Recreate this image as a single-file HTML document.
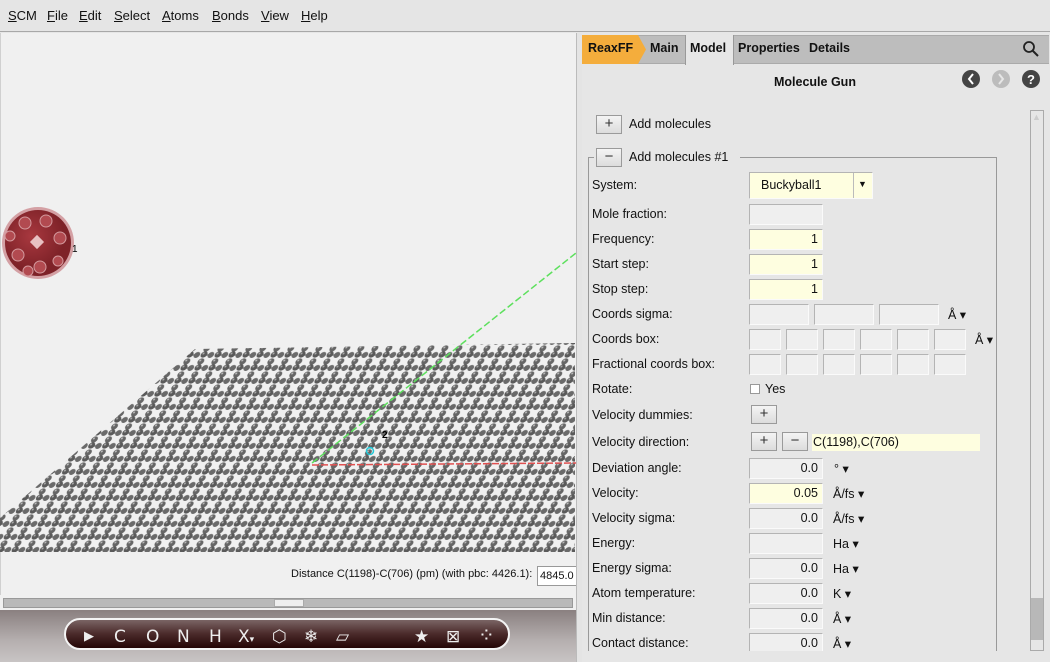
<!DOCTYPE html>
<html><head><meta charset="utf-8"><style>
*{box-sizing:border-box;margin:0;padding:0}
body{width:1050px;height:662px;overflow:hidden;background:#e6e6e6;font-family:"Liberation Sans",sans-serif;font-size:12.5px;color:#111;position:relative}
.a{position:absolute}
.menu{left:0;top:0;width:1050px;height:32px;background:#e5e5e5;border-bottom:1px solid #a8a8a8}
.menu span{position:absolute;top:8px;font-size:13px}
.menu u{text-decoration:underline}
.lbl{position:absolute;left:592px;font-size:12.5px}
.inp{position:absolute;height:21px;background:#efefef;border:1px solid #b4b4b4;border-right-color:#fafafa;border-bottom-color:#fafafa;text-align:right;padding-right:4px;line-height:19px;font-size:12.5px}
.y{background:#fefee0}
.btn{position:absolute;width:26px;height:19px;background:linear-gradient(#f4f4f4,#dcdcdc);border:1px solid #9a9a9a;text-align:center;line-height:16px;font-size:15px;color:#333}
.unit{position:absolute;font-size:12.5px}
.tool span{position:absolute;top:7px;color:#eee;font-size:17px;font-family:"DejaVu Sans",sans-serif}
</style></head><body>
<div class="a menu">
<span style="left:8px"><u>S</u>CM</span><span style="left:47px"><u>F</u>ile</span><span style="left:79px"><u>E</u>dit</span><span style="left:114px"><u>S</u>elect</span><span style="left:162px"><u>A</u>toms</span><span style="left:212px"><u>B</u>onds</span><span style="left:261px"><u>V</u>iew</span><span style="left:301px"><u>H</u>elp</span>
</div>
<div class="a" style="left:0;top:33px;width:576px;height:562px;background:#f0f0f0;border-left:1px solid #d0d0d0"></div>
<svg class="a" style="left:0;top:33px" width="576" height="530">
<defs>
<pattern id="g" width="14" height="13" patternUnits="userSpaceOnUse" patternTransform="skewX(-25)">
<rect width="14" height="13" fill="#f0f0f0"/>
<line x1="4" y1="3" x2="4" y2="10" stroke="#666" stroke-width="2.5"/>
<line x1="4" y1="10" x2="11" y2="10" stroke="#777" stroke-width="1.5"/>
<circle cx="4" cy="3.5" r="3.2" fill="#666"/><circle cx="4" cy="9.5" r="3.2" fill="#5a5a5a"/>
<circle cx="11" cy="10" r="3" fill="#6a6a6a"/><circle cx="3" cy="2.5" r="1" fill="#bbb"/><circle cx="3" cy="8.5" r="1" fill="#aaa"/>
</pattern>
<radialGradient id="r" cx="0.4" cy="0.4"><stop offset="0" stop-color="#a8383f"/><stop offset="1" stop-color="#7e2228"/></radialGradient>
</defs>
<polygon points="195,316 575,310 575,519 0,519 0,485" fill="url(#g)"/>
<circle cx="38" cy="210" r="36" fill="#d4a0a4"/>
<circle cx="38" cy="210" r="33" fill="url(#r)"/>
<g fill="#b24a50" stroke="#d49a9e" stroke-width="1"><circle cx="25" cy="190" r="6"/><circle cx="46" cy="188" r="6"/><circle cx="60" cy="205" r="6"/><circle cx="18" cy="222" r="6"/><circle cx="40" cy="234" r="6"/><circle cx="58" cy="228" r="5"/><circle cx="10" cy="203" r="5"/><circle cx="28" cy="238" r="5"/></g>
<rect x="32" y="204" width="10" height="10" fill="#e8c0c2" transform="rotate(45 37 209)"/>
<text x="72" y="219" font-size="10" font-family="Liberation Sans">1</text>
<line x1="312" y1="430" x2="576" y2="220" stroke="#5de05d" stroke-width="1.5" stroke-dasharray="7,3"/>
<line x1="312" y1="432" x2="576" y2="430" stroke="#e05050" stroke-width="1.5" stroke-dasharray="7,2"/>
<circle cx="370" cy="418" r="3.5" fill="none" stroke="#20c8d8" stroke-width="1.5"/>
<text x="382" y="405" font-size="10" font-weight="bold">2</text>
</svg>
<div class="a" style="left:291px;top:568px;font-size:11px">Distance C(1198)-C(706) (pm) (with pbc: 4426.1):</div>
<div class="a" style="left:537px;top:566px;width:40px;height:20px;background:#fff;border:1px solid #999;font-size:11px;padding:3px 0 0 2px">4845.0</div>
<div class="a" style="left:0;top:595px;width:576px;height:15px;background:#f0f0f0"></div>
<div class="a" style="left:3px;top:598px;width:570px;height:10px;background:#b9b9b9;border:1px solid #999"></div>
<div class="a" style="left:274px;top:599px;width:30px;height:8px;background:#eee;border:1px solid #aaa"></div>
<div class="a" style="left:0;top:610px;width:576px;height:52px;background:linear-gradient(#8a8080,#b6b0b0 60%,#c8c4c4)"></div>
<div class="a tool" style="left:64px;top:618px;width:446px;height:32px;border-radius:16px;border:2px solid #f4f4f4;background:linear-gradient(#7a6464,#4a2a2a 50%,#240505)">
<span style="left:18px;font-size:13px;top:9px">▶</span><span style="left:48px">C</span><span style="left:80px">O</span><span style="left:111px">N</span><span style="left:143px">H</span><span style="left:172px">X<small style="font-size:9px">▾</small></span><span style="left:206px">⬡</span><span style="left:238px">❄</span><span style="left:270px">▱</span><span style="left:348px">★</span><span style="left:380px">⊠</span><span style="left:412px;font-size:20px;top:3px">⁘</span>
</div>
<div class="a" style="left:576px;top:33px;width:6px;height:629px;background:#e4e4e4;border-left:1px solid #bbb"></div>
<div class="a" style="left:582px;top:35px;width:467px;height:29px;background:#bdbdbd;border-top:1px solid #aaa;border-bottom:1px solid #aaa"></div>
<svg class="a" style="left:582px;top:35px" width="65" height="29"><polygon points="0,0 56,0 64,14.5 56,29 0,29" fill="#f4ad3c"/></svg>
<div class="a" style="left:588px;top:41px;font-weight:bold">ReaxFF</div>
<div class="a" style="left:650px;top:41px;font-weight:bold">Main</div>
<div class="a" style="left:685px;top:35px;width:49px;height:30px;background:#e6e6e6;border-left:1px solid #999;border-right:1px solid #999"></div>
<div class="a" style="left:690px;top:41px;font-weight:bold">Model</div>
<div class="a" style="left:738px;top:41px;font-weight:bold">Properties</div>
<div class="a" style="left:809px;top:41px;font-weight:bold">Details</div>
<svg class="a" style="left:1022px;top:40px" width="18" height="18"><circle cx="7" cy="7" r="5" fill="none" stroke="#222" stroke-width="1.8"/><line x1="11" y1="11" x2="16" y2="16" stroke="#222" stroke-width="2"/></svg>
<div class="a" style="left:774px;top:75px;font-weight:bold">Molecule Gun</div>
<svg class="a" style="left:961px;top:69px" width="80" height="20"><circle cx="10" cy="10" r="9" fill="#444"/><path d="M12 5 L8 10 L12 15" stroke="#fff" stroke-width="2" fill="none"/><circle cx="40" cy="10" r="9" fill="#bcbcbc"/><path d="M38 5 L42 10 L38 15" stroke="#e6e6e6" stroke-width="2" fill="none"/><circle cx="70" cy="10" r="9" fill="#444"/><text x="66" y="15" fill="#fff" font-size="13" font-weight="bold" font-family="Liberation Sans">?</text></svg>
<div class="btn" style="left:596px;top:115px">+</div><div class="a" style="left:629px;top:117px">Add molecules</div>
<div class="a" style="left:588px;top:157px;width:409px;height:505px;border:1px solid #999;border-bottom:none"></div>
<div class="a" style="left:594px;top:148px;width:146px;height:18px;background:#e6e6e6"></div>
<div class="btn" style="left:596px;top:148px">−</div><div class="a" style="left:629px;top:150px">Add molecules #1</div>
<div class="a" style="left:1030px;top:110px;width:14px;height:541px;background:#e6e6e6;border:1px solid #aaa"></div>
<div class="a" style="left:1031px;top:598px;width:12px;height:42px;background:#b8b8b8"></div>
<div class="a" style="left:1032px;top:112px;font-size:9px;color:#ccc">▲</div>
<div class="lbl" style="top:178px">System:</div>
<div class="inp y" style="left:749px;top:172px;width:124px;height:27px;text-align:left;padding-left:11px;line-height:25px">Buckyball1</div>
<div class="a" style="left:853px;top:173px;width:1px;height:25px;background:#bbb"></div><div class="a" style="left:858px;top:179px;font-size:9px">▼</div>
<div class="lbl" style="top:207px">Mole fraction:</div><div class="inp" style="left:749px;top:204px;width:74px"></div>
<div class="lbl" style="top:232px">Frequency:</div><div class="inp y" style="left:749px;top:229px;width:74px">1</div>
<div class="lbl" style="top:257px">Start step:</div><div class="inp y" style="left:749px;top:254px;width:74px">1</div>
<div class="lbl" style="top:282px">Stop step:</div><div class="inp y" style="left:749px;top:279px;width:74px">1</div>
<div class="lbl" style="top:307px">Coords sigma:</div>
<div class="inp" style="left:749px;top:304px;width:60px"></div><div class="inp" style="left:814px;top:304px;width:60px"></div><div class="inp" style="left:879px;top:304px;width:60px"></div><div class="unit" style="left:948px;top:307px">Å ▾</div>
<div class="lbl" style="top:332px">Coords box:</div>
<div class="inp" style="left:749px;top:329px;width:32px"></div><div class="inp" style="left:786px;top:329px;width:32px"></div><div class="inp" style="left:823px;top:329px;width:32px"></div><div class="inp" style="left:860px;top:329px;width:32px"></div><div class="inp" style="left:897px;top:329px;width:32px"></div><div class="inp" style="left:934px;top:329px;width:32px"></div><div class="unit" style="left:975px;top:332px">Å ▾</div>
<div class="lbl" style="top:357px">Fractional coords box:</div>
<div class="inp" style="left:749px;top:354px;width:32px"></div><div class="inp" style="left:786px;top:354px;width:32px"></div><div class="inp" style="left:823px;top:354px;width:32px"></div><div class="inp" style="left:860px;top:354px;width:32px"></div><div class="inp" style="left:897px;top:354px;width:32px"></div><div class="inp" style="left:934px;top:354px;width:32px"></div>
<div class="lbl" style="top:382px">Rotate:</div><div class="a" style="left:750px;top:384px;width:10px;height:10px;background:#fff;border:1px solid #999"></div><div class="a" style="left:765px;top:382px">Yes</div>
<div class="lbl" style="top:408px">Velocity dummies:</div><div class="btn" style="left:751px;top:405px">+</div>
<div class="lbl" style="top:435px">Velocity direction:</div><div class="btn" style="left:751px;top:432px">+</div><div class="btn" style="left:782px;top:432px">−</div>
<div class="a" style="left:812px;top:434px;width:168px;height:17px;background:#fefee0;padding-left:1px;line-height:16px">C(1198),C(706)</div>
<div class="lbl" style="top:461px">Deviation angle:</div><div class="inp" style="left:749px;top:458px;width:74px">0.0</div><div class="unit" style="left:834px;top:461px">° ▾</div>
<div class="lbl" style="top:486px">Velocity:</div><div class="inp y" style="left:749px;top:483px;width:74px">0.05</div><div class="unit" style="left:833px;top:486px">Å/fs ▾</div>
<div class="lbl" style="top:511px">Velocity sigma:</div><div class="inp" style="left:749px;top:508px;width:74px">0.0</div><div class="unit" style="left:833px;top:511px">Å/fs ▾</div>
<div class="lbl" style="top:536px">Energy:</div><div class="inp" style="left:749px;top:533px;width:74px"></div><div class="unit" style="left:833px;top:536px">Ha ▾</div>
<div class="lbl" style="top:561px">Energy sigma:</div><div class="inp" style="left:749px;top:558px;width:74px">0.0</div><div class="unit" style="left:833px;top:561px">Ha ▾</div>
<div class="lbl" style="top:586px">Atom temperature:</div><div class="inp" style="left:749px;top:583px;width:74px">0.0</div><div class="unit" style="left:833px;top:586px">K ▾</div>
<div class="lbl" style="top:611px">Min distance:</div><div class="inp" style="left:749px;top:608px;width:74px">0.0</div><div class="unit" style="left:833px;top:611px">Å ▾</div>
<div class="lbl" style="top:636px">Contact distance:</div><div class="inp" style="left:749px;top:633px;width:74px">0.0</div><div class="unit" style="left:833px;top:636px">Å ▾</div>
<div class="a" style="left:582px;top:651px;width:468px;height:11px;background:#e6e6e6"></div>
</body></html>
